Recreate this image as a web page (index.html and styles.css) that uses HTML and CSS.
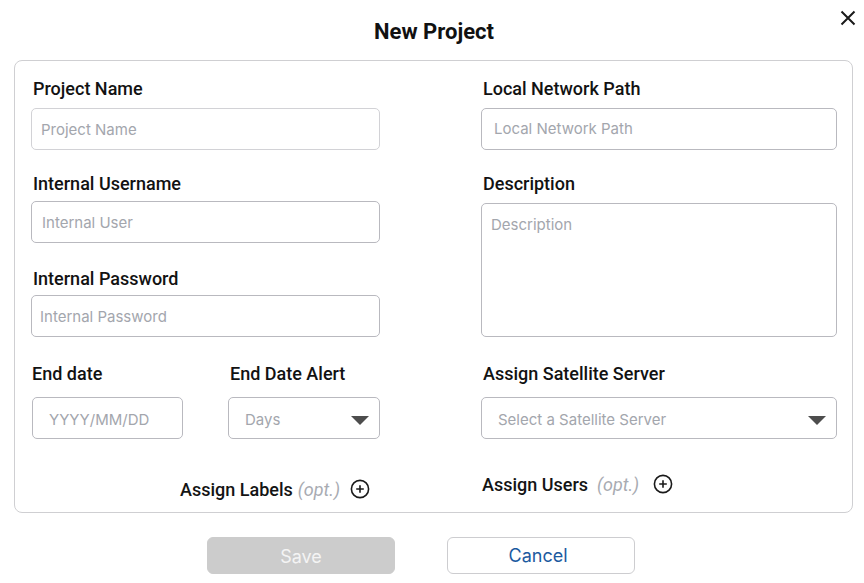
FILE: index.html
```html
<!DOCTYPE html>
<html lang="en">
<head>
<meta charset="utf-8">
<title>New Project</title>
<link rel="stylesheet" href="styles.css">
</head>
<body>
<div class="modal">
  <header class="head">
    <h1 class="title">New Project</h1>
    <button class="close" type="button" aria-label="Close">
      <svg width="16" height="16" viewBox="0 0 16 16"><path d="M1.5 1.5 L14.5 14.5 M14.5 1.5 L1.5 14.5" stroke="#1a1a1a" stroke-width="2" fill="none"/></svg>
    </button>
  </header>

  <form class="card">
    <div class="col col-left">
      <label class="lbl">Project Name</label>
      <div class="field f-first"><span class="ph">Project Name</span></div>

      <label class="lbl lbl-2">Internal Username</label>
      <div class="field f-user"><span class="ph ph-user">Internal User</span></div>

      <label class="lbl lbl-3">Internal Password</label>
      <div class="field f-pass"><span class="ph">Internal Password</span></div>

      <div class="pair">
        <div class="pair-item">
          <label class="lbl">End date</label>
          <div class="field f-date"><span class="ph ph-date">YYYY/MM/DD</span></div>
        </div>
        <div class="pair-item">
          <label class="lbl">End Date Alert</label>
          <div class="field f-date select"><span class="ph ph-date">Days</span><span class="caret"></span></div>
        </div>
      </div>

      <div class="assign assign-labels">
        <span class="assign-text">Assign Labels</span>
        <span class="opt">(opt.)</span>
        <svg class="plus" width="20" height="20" viewBox="0 0 20 20"><circle cx="10" cy="10" r="8.6" stroke="#1a1a1a" stroke-width="1.6" fill="none"/><path d="M10 6.2 V13.8 M6.2 10 H13.8" stroke="#1a1a1a" stroke-width="1.6"/></svg>
      </div>
    </div>

    <div class="col col-right">
      <label class="lbl">Local Network Path</label>
      <div class="field f-first"><span class="ph ph-wide">Local Network Path</span></div>

      <label class="lbl lbl-2">Description</label>
      <div class="field area"><span class="ph">Description</span></div>

      <label class="lbl lbl-4">Assign Satellite Server</label>
      <div class="field f-date select"><span class="ph ph-date">Select a Satellite Server</span><span class="caret"></span></div>

      <div class="assign assign-users">
        <span class="assign-text">Assign Users</span>
        <span class="opt opt-users">(opt.)</span>
        <svg class="plus" width="20" height="20" viewBox="0 0 20 20"><circle cx="10" cy="10" r="8.6" stroke="#1a1a1a" stroke-width="1.6" fill="none"/><path d="M10 6.2 V13.8 M6.2 10 H13.8" stroke="#1a1a1a" stroke-width="1.6"/></svg>
      </div>
    </div>
  </form>

  <div class="actions">
    <button class="btn btn-save" type="button" disabled>Save</button>
    <button class="btn btn-cancel" type="button">Cancel</button>
  </div>
</div>
</body>
</html>
```

FILE: styles.css
```css
* { box-sizing: border-box; }
html, body { margin: 0; padding: 0; background: #fff; }
body {
  width: 864px;
  height: 583px;
  overflow: hidden;
  font-family: Roboto, "Liberation Sans", sans-serif;
  color: #141414;
}
.modal { width: 864px; }

.head {
  position: relative;
  height: 60px;
  display: flex;
  justify-content: center;
}
.title {
  margin: 0;
  padding: 20px 0 0 4px;
  font-family: Roboto, sans-serif;
  font-weight: 700;
  font-size: 22px;
  line-height: 24px;
  color: #111;
}
.close {
  position: absolute;
  top: 10px;
  right: 8px;
  width: 16px;
  height: 16px;
  padding: 0;
  border: 0;
  background: none;
  display: flex;
}

.card {
  margin: 0 11px 0 14px;
  height: 453px;
  border: 1px solid #cfcfd2;
  border-radius: 8px;
  padding: 17px 15px 0 16px;
  display: grid;
  grid-template-columns: 349px 356px;
  column-gap: 101px;
  align-items: start;
}
.col { display: flex; flex-direction: column; }

.lbl {
  display: block;
  font-family: Roboto, sans-serif;
  font-weight: 500;
  font-size: 18px;
  line-height: 20px;
  height: 20px;
  color: #121212;
  padding: 1px 0 0 2px;
}
.lbl-2 { margin-top: 23px; }
.lbl-3 { margin-top: 25px; }
.lbl-4 { margin-top: 26px; }

.field {
  height: 42px;
  border: 1px solid #b9b9bf;
  border-radius: 5px;
  display: flex;
  align-items: center;
  padding-left: 9px;
  padding-top: 2px;
  position: relative;
}
.f-first { margin-top: 10px; border-color: #d2d2d6; }
.col-right .f-first { border-color: #b9b9bf; padding-left: 12px; padding-top: 0; }
.f-user { margin-top: 8px; padding-left: 10px; }
.f-pass { margin-top: 7px; padding-left: 8px; }
.f-date { margin-top: 14px; padding-left: 16px; padding-top: 3px; }
.area {
  margin-top: 10px;
  height: 134px;
  align-items: flex-start;
  padding: 12px 0 0 9px;
}

.ph {
  font-family: Inter, sans-serif;
  font-size: 15px;
  line-height: 18px;
  color: #a3a6ad;
  white-space: nowrap;
}

.select .caret {
  position: absolute;
  right: 10px;
  top: 18px;
  width: 0;
  height: 0;
  border-left: 9px solid transparent;
  border-right: 9px solid transparent;
  border-top: 9px solid #4d4d4d;
}

.pair {
  display: grid;
  grid-template-columns: 152px 152px;
  column-gap: 45px;
  margin-top: 26px;
}
.pair-item { display: flex; flex-direction: column; }
.pair-item:first-child .lbl { padding-left: 1px; }
.pair-item:first-child .field { margin-left: 1px; width: 151px; }

.assign {
  display: flex;
  align-items: center;
  height: 20px;
  font-family: Roboto, sans-serif;
  font-weight: 500;
  font-size: 18px;
  color: #141414;
}
.assign-labels {
  margin-top: 40px;
  justify-content: flex-end;
  padding-right: 10px;
}
.assign-users {
  margin-top: 35px;
  padding-left: 1px;
}
.opt {
  font-family: Roboto, sans-serif;
  font-style: italic;
  font-weight: 400;
  color: #a8abb2;
  margin-left: 5px;
}
.opt-users { margin-left: 9px; }
.plus { margin-left: 10px; }
.assign-users .plus { margin-left: 14px; }

.actions {
  display: flex;
  justify-content: center;
  column-gap: 52px;
  padding-right: 22px;
  margin-top: 24px;
}
.btn {
  width: 188px;
  height: 37px;
  border-radius: 6px;
  font-family: Inter, sans-serif;
  font-size: 18px;
  padding: 0 6px 0 0;
}
.btn-save {
  background: #cccccc;
  border: 1px solid #cccccc;
  color: #f4f4f4;
  padding: 2px 0 0 0;
}
.btn-cancel {
  background: #fff;
  border: 1px solid #cdcdd0;
  color: #1c5aa0;
}
```
